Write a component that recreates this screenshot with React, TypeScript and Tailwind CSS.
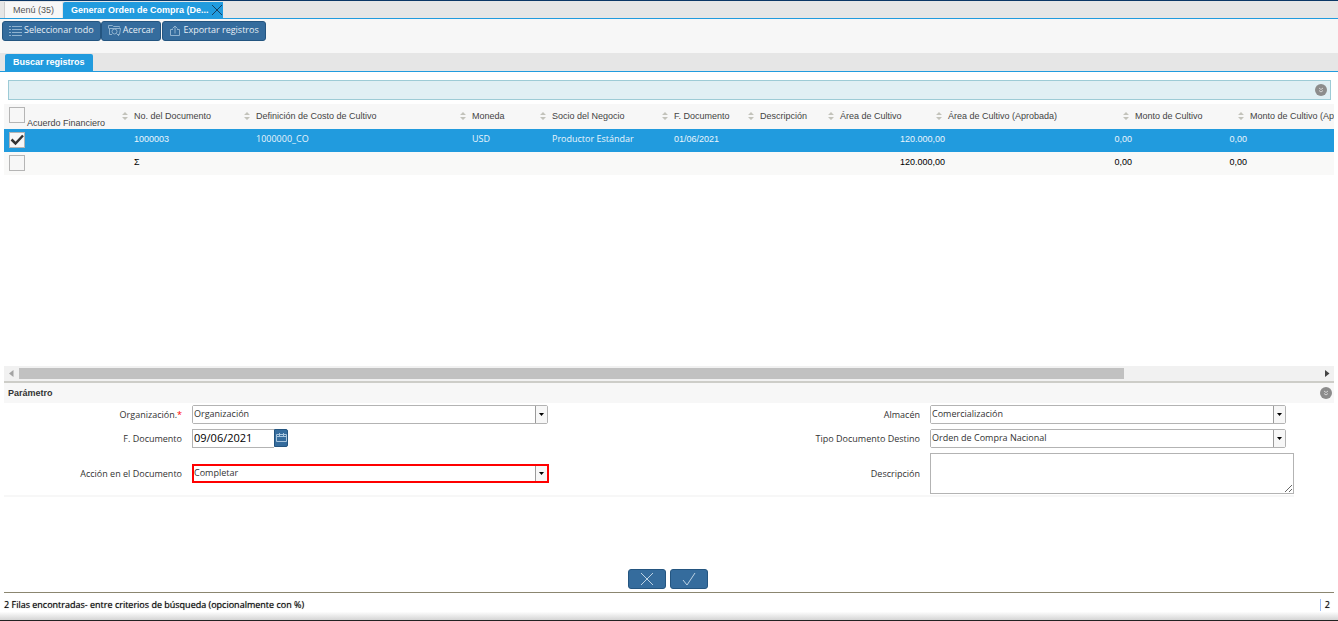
import { useState } from 'react';
import type { ReactNode } from 'react';
import { clsx } from 'clsx';

const SANS = "font-['Liberation_Sans',Arial,sans-serif]";

interface Column {
  label: string;
  width: string;
  numeric?: boolean;
  humanist?: boolean;
}

const COLUMNS: Column[] = [
  { label: 'Acuerdo Financiero', width: 'w-[128px]' },
  { label: 'No. del Documento', width: 'w-[122px]' },
  { label: 'Definición de Costo de Cultivo', width: 'w-[216px]', humanist: true },
  { label: 'Moneda', width: 'w-[80px]', humanist: true },
  { label: 'Socio del Negocio', width: 'w-[122px]', humanist: true },
  { label: 'F. Documento', width: 'w-[86px]' },
  { label: 'Descripción', width: 'w-[80px]', humanist: true },
  { label: 'Área de Cultivo', width: 'w-[108px]', numeric: true },
  { label: 'Área de Cultivo (Aprobada)', width: 'w-[187px]', numeric: true },
  { label: 'Monto de Cultivo', width: 'w-[115px]', numeric: true },
  { label: 'Monto de Cultivo (Aprobado)', width: 'w-[326px]', numeric: true },
];

const ROWS = [
  ['1000003', '1000000_CO', 'USD', 'Productor Estándar', '01/06/2021', '', '120.000,00', '0,00', '0,00', ''],
  ['Σ', '', '', '', '', '', '120.000,00', '0,00', '0,00', ''],
];

function ListIcon() {
  return (
    <svg width="13" height="11" viewBox="0 0 13 11" stroke="#8fb2cf" fill="none">
      <path d="M0 .5h2M3 .5h10M0 3.5h2M3 3.5h10M0 6.5h2M3 6.5h10M0 9.5h2M3 9.5h10" />
    </svg>
  );
}

function ZoomFolderIcon() {
  return (
    <svg width="13" height="12" viewBox="0 0 13 12" stroke="#8fb2cf" fill="none">
      <path d="M4 9.500H1.500V3.500M.5 3.500v-3h4l1 1h6v1M1 3.500h11.500l-1 6h-1.500" />
      <circle cx="6.500" cy="6.500" r="2.500" />
      <path d="M8.500 8.500l2.500 2.500" />
    </svg>
  );
}

function ExportIcon() {
  return (
    <svg width="12" height="12" viewBox="0 0 12 12" stroke="#8fb2cf" fill="none">
      <path d="M4 4.500H1.500v6h9v-6H8M6 8.500V1M3.500 3.500L6 1L8.500 3.500" />
    </svg>
  );
}

function CalendarIcon() {
  return (
    <svg width="11" height="11" viewBox="0 0 11 11" stroke="#a9c6de" fill="none">
      <path d="M.5 1.500h10v7h-10zM.5 3.500h10M3.500 0v3M7.500 0v3" />
    </svg>
  );
}

function SortIcon() {
  return (
    <svg width="6" height="8" viewBox="0 0 6 8" fill="#c3c3bb" className="shrink-0">
      <path d="M0 3L3 0l3 3zM0 5h6L3 8z" />
    </svg>
  );
}

function CollapseIcon() {
  return (
    <svg width="12" height="12" viewBox="0 0 12 12" fill="none">
      <circle cx="6" cy="6" r="6" fill="#8c8c8c" />
      <path d="M4 4l2 1.500L8 4M4 6.500L6 8l2-1.500" stroke="#d4d4d4" />
    </svg>
  );
}

function ToolbarButton({ icon, children }: { icon: ReactNode; children: ReactNode }) {
  return (
    <button
      type="button"
      className="flex h-5 items-center gap-0.5 rounded-[3px] border border-[#245580] bg-[#356c9d] px-1.5 text-[9px] leading-3 whitespace-nowrap text-[#e6eef5]"
    >
      {icon}
      <span className="pb-0.5">{children}</span>
    </button>
  );
}

function Checkbox({ label, checked, onChange }: { label: string; checked: boolean; onChange: () => void }) {
  return (
    <label className="relative block size-4 shrink-0">
      <input
        type="checkbox"
        aria-label={label}
        checked={checked}
        onChange={onChange}
        className="block size-4 appearance-none border border-[#b5b5b5] bg-[#f7f7f7]"
      />
      {checked && (
        <svg width="16" height="16" viewBox="0 0 16 16" fill="none" className="pointer-events-none absolute inset-0">
          <path d="M2.500 7.500L6.500 11.500L14 3.500" stroke="#333" strokeWidth="2.500" />
        </svg>
      )}
    </label>
  );
}

interface ComboProps {
  id: string;
  value: string;
  highlighted?: boolean;
}

function Combo({ id, value, highlighted }: ComboProps) {
  return (
    <div
      className={clsx(
        'relative flex h-[19px]',
        highlighted ? 'mr-[7px] border-2 border-[#f00]' : 'mr-2 rounded-[2px] border border-[#b3b3b3]',
      )}
    >
      <select
        id={id}
        defaultValue={value}
        className={clsx(
          'w-full appearance-none bg-white pb-0.5 text-[9px] leading-3 text-[#333] outline-none',
          highlighted ? 'px-0' : 'px-px',
        )}
      >
        <option>{value}</option>
      </select>
      <span className="pointer-events-none absolute inset-y-0 right-0 flex w-3 items-center justify-center border-l border-[#9b9b9b] bg-[#f7f7f7]">
        <svg width="5" height="3" viewBox="0 0 5 3">
          <path d="M0 0h5L2.500 3z" fill="#000" />
        </svg>
      </span>
    </div>
  );
}

function FieldLabel({ id, required, children }: { id: string; required?: boolean; children: ReactNode }) {
  return (
    <label htmlFor={id} className="pr-2.5 text-right text-[9px] leading-3 whitespace-nowrap text-[#333]">
      {children}
      {required && <span className="text-[#f00]">*</span>}
    </label>
  );
}

function ResultsTable() {
  const [selected, setSelected] = useState([true, false]);

  const toggle = (index: number) => setSelected(selected.map((value, i) => (i === index ? !value : value)));
  const allSelected = selected.every(Boolean);

  return (
    <div className="mx-1 mt-1 flex-1 overflow-hidden">
      <table className={clsx('w-[1570px] table-fixed border-collapse text-[9px] leading-3', SANS)}>
        <thead>
          <tr className="h-[25px] bg-[#f7f7f7] text-[#444]">
            {COLUMNS.map((column, index) => (
              <th key={column.label} className={clsx('p-0 font-normal whitespace-nowrap', column.width)}>
                <div className="flex h-[25px] items-center justify-between pr-1 pb-px pl-0.5">
                  {index === 0 ? (
                    <div className="flex h-6 items-start gap-0.5 pt-[3px] pl-[3px]">
                      <Checkbox
                        label="Seleccionar todo"
                        checked={allSelected}
                        onChange={() => setSelected(selected.map(() => !allSelected))}
                      />
                      <span className="pt-2.5">{column.label}</span>
                    </div>
                  ) : (
                    column.label
                  )}
                  <SortIcon />
                </div>
              </th>
            ))}
          </tr>
        </thead>
        <tbody>
          {ROWS.map((row, index) => (
            <tr
              key={row[0]}
              className={clsx('h-[23px]', selected[index] ? 'bg-[#219bde] text-[#e9f5fc]' : 'bg-[#f9f9f8] text-black')}
            >
              <td className="p-0 pb-0.5 pl-[5px]">
                <Checkbox label={`Fila ${row[0]}`} checked={selected[index]} onChange={() => toggle(index)} />
              </td>
              {row.map((cell, i) => {
                const column = COLUMNS[i + 1];
                return (
                  <td
                    key={column.label}
                    className={clsx(
                      'pt-0 pr-px pb-1 pl-0.5 whitespace-nowrap',
                      column.numeric && 'text-right',
                      column.humanist && "font-['Open_Sans',sans-serif]",
                    )}
                  >
                    {cell}
                  </td>
                );
              })}
            </tr>
          ))}
        </tbody>
      </table>
    </div>
  );
}

export default function App() {
  return (
    <div className="flex min-h-screen flex-col border-t border-b border-t-[#0b3766] border-b-[#222] bg-white font-['Open_Sans',sans-serif] text-[9px] leading-3 text-[#333]">
      <nav className={clsx('flex h-[18px] items-end gap-px border-b border-[#219bde] bg-[#e6e6e6] pl-1', SANS)}>
        <button type="button" className="h-4 border-l border-[#ccc] bg-[#f7f7f7] px-2 text-[#555]">
          Menú (35)
        </button>
        <div className="flex h-4 items-center rounded-tl-[2px] bg-[#219bde] pl-2 font-bold text-white">
          <button type="button" className="pr-0.5">
            Generar Orden de Compra (De...
          </button>
          <button type="button" aria-label="Cerrar">
            <svg width="12" height="12" viewBox="0 0 12 12" stroke="#173f5f">
              <path d="M1 1l10 10M11 1L1 11" />
            </svg>
          </button>
        </div>
      </nav>

      <div className="flex h-[34px] bg-[#f7f7f7] pt-0.5 pl-0.5">
        <ToolbarButton icon={<ListIcon />}>Seleccionar todo</ToolbarButton>
        <ToolbarButton icon={<ZoomFolderIcon />}>Acercar</ToolbarButton>
        <div className="ml-px">
          <ToolbarButton icon={<ExportIcon />}>Exportar registros</ToolbarButton>
        </div>
      </div>

      <div className={clsx('flex h-[19px] items-end border-b border-[#219bde] bg-[#e6e6e6] pl-[5px]', SANS)}>
        <button type="button" className="h-[17px] rounded-t-[2px] bg-[#219bde] px-2 pb-0.5 font-bold text-white">
          Buscar registros
        </button>
      </div>

      <div className="mt-2 mr-[7px] ml-2 flex h-5 items-center justify-end border border-[#9dcbd6] bg-[#e0eff4] pr-[3px]">
        <button type="button" aria-label="Expandir criterios">
          <CollapseIcon />
        </button>
      </div>

      <ResultsTable />

      <div className="mx-1 flex h-[15px] items-center gap-1 bg-[#f1f1f1] px-1">
        <svg width="7" height="7" viewBox="0 0 7 7" fill="#a3a3a3">
          <path d="M5.500 0v7L1 3.500z" />
        </svg>
        <div className="h-[11px] flex-1">
          <div className="h-full w-[85%] bg-[#c1c1c1]" />
        </div>
        <svg width="7" height="7" viewBox="0 0 7 7" fill="#444">
          <path d="M2 0v7l4.500-3.500z" />
        </svg>
      </div>

      <section className="mx-1">
        <div className={clsx('flex h-[22px] items-center justify-between border-t-2 border-[#cdcdc8] bg-[#f7f7f7] pl-1', SANS)}>
          <h2 className="font-bold">Parámetro</h2>
          <button type="button" aria-label="Contraer parámetros" className="pr-0.5">
            <CollapseIcon />
          </button>
        </div>

        <form className="mr-10 grid grid-cols-[188fr_364fr_374fr_364fr] items-center gap-y-[5px] border-b-2 border-[#f7f7f7] pt-0.5 pb-px">
          <FieldLabel id="organizacion" required>
            Organización.
          </FieldLabel>
          <Combo id="organizacion" value="Organización" />
          <FieldLabel id="almacen">Almacén</FieldLabel>
          <Combo id="almacen" value="Comercialización" />

          <FieldLabel id="fecha">F. Documento</FieldLabel>
          <div className="flex h-[19px]">
            <input
              id="fecha"
              type="text"
              defaultValue="09/06/2021"
              className="w-[82px] border border-r-0 border-[#b3b3b3] px-px pb-px text-[11px] text-black outline-none"
            />
            <button
              type="button"
              aria-label="Abrir calendario"
              className="flex h-[18px] w-3.5 items-center justify-center rounded-r-[2px] border border-[#245580] bg-[#356c9d]"
            >
              <CalendarIcon />
            </button>
          </div>
          <FieldLabel id="tipo">Tipo Documento Destino</FieldLabel>
          <Combo id="tipo" value="Orden de Compra Nacional" />

          <FieldLabel id="accion">Acción en el Documento</FieldLabel>
          <Combo id="accion" value="Completar" highlighted />
          <FieldLabel id="descripcion">Descripción</FieldLabel>
          <textarea id="descripcion" className="block h-[41px] w-full border border-[#b3b3b3] bg-white outline-none" />
        </form>
      </section>

      <div className="mt-[72px] mr-0.5 mb-[3px] flex justify-center gap-1">
        <button
          type="button"
          aria-label="Cancelar"
          className="flex h-5 w-[38px] items-center justify-center rounded-[3px] border border-[#245580] bg-[#356c9d]"
        >
          <svg width="14" height="14" viewBox="0 0 14 14" stroke="#bdd3e5">
            <path d="M1 1l12 12M13 1L1 13" />
          </svg>
        </button>
        <button
          type="button"
          aria-label="Aceptar"
          className="flex h-5 w-[38px] items-center justify-center rounded-[3px] border border-[#245580] bg-[#356c9d]"
        >
          <svg width="14" height="14" viewBox="0 0 14 14" stroke="#bdd3e5" fill="none">
            <path d="M1 8l4 5L13 1" />
          </svg>
        </button>
      </div>

      <footer className="bg-linear-to-t from-[#d5d5d5] to-white to-30%">
        <div className="mx-1 flex h-7 items-start justify-between border-t border-[#8b8670] pt-1.5 text-black [text-shadow:0_0_1px_#0008]">
          <span>2 Filas encontradas- entre criterios de búsqueda (opcionalmente con %)</span>
          <span className="border-l border-[#9bbdf5] pr-1 pl-1">2</span>
        </div>
      </footer>
    </div>
  );
}
